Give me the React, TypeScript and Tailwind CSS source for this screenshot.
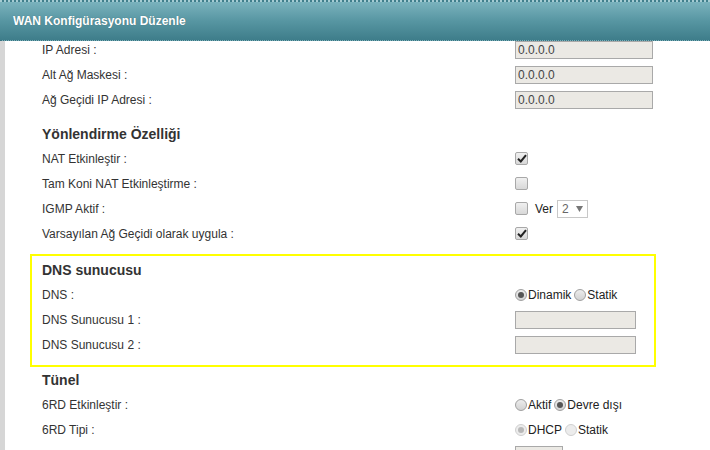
import React from 'react';

const font = { fontFamily: '"Liberation Sans", Arial, sans-serif' };

function TextBox({ value = '', w = 'w-[138px]' }: { value?: string; w?: string }) {
  return (
    <div className={`${w} h-[18px] border border-[#a9a9a9] bg-[#ebe9e4] text-[12px] leading-[16px] text-[#444] pl-[2px]`}>
      {value}
    </div>
  );
}

function Check({ checked }: { checked?: boolean }) {
  return (
    <span className="inline-flex w-[13px] h-[13px] items-center justify-center rounded-[2px] border border-[#a8a8a8] bg-gradient-to-b from-[#f0f0f0] to-[#d8d8d8]">
      {checked && (
        <svg width="10" height="9" viewBox="0 0 10 9">
          <path d="M1 4.8 L3.8 7.5 L9 1.2" fill="none" stroke="#222" strokeWidth="2" />
        </svg>
      )}
    </span>
  );
}

function Radio({ checked, disabled }: { checked?: boolean; disabled?: boolean }) {
  return (
    <span
      className={`inline-flex w-[12px] h-[12px] items-center justify-center rounded-full border ${
        disabled ? 'border-[#d0d0d0] bg-[#ececec]' : 'border-[#a0a0a0] bg-gradient-to-b from-[#ededed] to-[#d2d2d2]'
      }`}
    >
      {checked && <span className={`w-[6px] h-[6px] rounded-full ${disabled ? 'bg-[#b8b8b8]' : 'bg-[#555]'}`} />}
    </span>
  );
}

function Row({ label, children, indent = 'pl-[42px]' }: { label: string; children?: React.ReactNode; indent?: string }) {
  return (
    <div className={`flex items-center h-[25px] ${indent}`}>
      <div className="w-[473px] text-[12px] text-[#333]">{label}</div>
      <div className="flex items-center">{children}</div>
    </div>
  );
}

function Section({ title, h, indent = 'pl-[42px]' }: { title: string; h: string; indent?: string }) {
  return (
    <div className={`flex items-end ${h} pb-[4px] ${indent}`}>
      <span className="text-[14px] leading-[16px] font-bold text-[#333]">{title}</span>
    </div>
  );
}

export default function App() {
  return (
    <div className="w-[710px] h-[450px] overflow-hidden bg-white flex flex-col" style={font}>
      {/* başlık */}
      <div className="relative z-10 h-[41px] shrink-0 border-t-2 border-dotted border-[#a6ccd3] bg-gradient-to-b from-[#7ab2bd] via-[#5796a2] to-[#3e7d8a] flex items-center pl-[13px] pb-[1px] border-b border-b-[#3a7380]">
        <span className="text-white text-[12px] font-bold [text-shadow:0_0_1px_rgba(0,0,0,0.3)]">WAN Konfigürasyonu Düzenle</span>
      </div>

      <div className="flex flex-1 min-h-0">
        <div className="w-[5px] shrink-0 bg-[#d6d6d6]" />
        <div className="flex-1 -mt-[4px] -ml-[5px]">
          <Row label="IP Adresi :">
            <TextBox value="0.0.0.0" />
          </Row>
          <Row label="Alt Ağ Maskesi :">
            <TextBox value="0.0.0.0" />
          </Row>
          <Row label="Ağ Geçidi IP Adresi :">
            <TextBox value="0.0.0.0" />
          </Row>

          <Section title="Yönlendirme Özelliği" h="h-[34px]" />
          <Row label="NAT Etkinleştir :">
            <Check checked />
          </Row>
          <Row label="Tam Koni NAT Etkinleştirme :">
            <Check />
          </Row>
          <Row label="IGMP Aktif :">
            <Check />
            <span className="ml-[7px] text-[12px] text-[#222]">Ver</span>
            <div className="ml-[4px] w-[31px] h-[18px] border border-[#c8c8c8] flex items-center justify-between px-[4px] text-[12px] text-[#666]">
              <span>2</span>
              <svg width="7" height="6" viewBox="0 0 7 6">
                <path d="M0 0 H7 L3.5 6 Z" fill="#777" />
              </svg>
            </div>
          </Row>
          <Row label="Varsayılan Ağ Geçidi olarak uygula :">
            <Check checked />
          </Row>

          <div className="mt-[8px] ml-[30px] w-[626px] border-2 border-[#ffff00] pb-[8px]">
            <Section title="DNS sunucusu" h="h-[26px]" indent="pl-[10px]" />
            <Row label="DNS :" indent="pl-[10px]">
              <Radio checked />
              <span className="ml-[1px] text-[12px] text-[#222]">Dinamik</span>
              <span className="ml-[3px]" />
              <Radio />
              <span className="ml-[1px] text-[12px] text-[#222]">Statik</span>
            </Row>
            <Row label="DNS Sunucusu 1 :" indent="pl-[10px]">
              <TextBox w="w-[121px]" />
            </Row>
            <Row label="DNS Sunucusu 2 :" indent="pl-[10px]">
              <TextBox w="w-[121px]" />
            </Row>
          </div>

          <Section title="Tünel" h="h-[25px]" />
          <Row label="6RD Etkinleştir :">
            <Radio />
            <span className="ml-[1px] text-[12px] text-[#222]">Aktif</span>
            <span className="ml-[3px]" />
            <Radio checked />
            <span className="ml-[1px] text-[12px] text-[#222]">Devre dışı</span>
          </Row>
          <Row label="6RD Tipi :">
            <Radio checked disabled />
            <span className="ml-[1px] text-[12px] text-[#222]">DHCP</span>
            <span className="ml-[3px]" />
            <Radio disabled />
            <span className="ml-[1px] text-[12px] text-[#222]">Statik</span>
          </Row>
          <Row label="6RD Sınır Aktarıcı Yönlendirici IPv4 Adresi :">
            <TextBox w="w-[48px]" />
          </Row>
        </div>
      </div>
    </div>
  );
}
